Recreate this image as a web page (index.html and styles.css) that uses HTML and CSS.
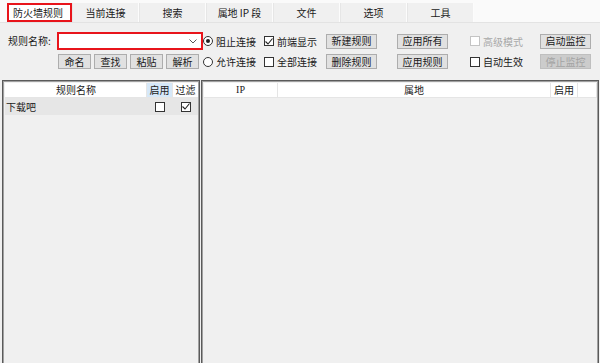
FILE: index.html
```html
<!DOCTYPE html>
<html lang="zh">
<head>
<meta charset="utf-8">
<link rel="stylesheet" href="styles.css">
</head>
<body>
<div class="app">
  <div class="tabs">
    <div class="tab active">防火墙规则</div>
    <div class="tab">当前连接</div>
    <div class="tab">搜索</div>
    <div class="tab">属地 IP 段</div>
    <div class="tab">文件</div>
    <div class="tab">选项</div>
    <div class="tab">工具</div>
  </div>
  <div class="controls">
    <div class="label">规则名称:</div>
    <div class="combo">
      <svg class="arrow" width="8" height="5" viewBox="0 0 8 5"><path d="M0.5 0.5 L4 4 L7.5 0.5" fill="none" stroke="#555" stroke-width="1"/></svg>
    </div>
    <div class="opt"><span class="radio on"></span>阻止连接</div>
    <div class="opt"><span class="check"><svg width="8" height="7" viewBox="0 0 8 7"><path d="M0.5 3.5 L3 6 L7.5 0.5" fill="none" stroke="#222" stroke-width="1.1"/></svg></span>前端显示</div>
    <div class="cell"><span class="btn">新建规则</span></div>
    <div class="cell"><span class="btn">应用所有</span></div>
    <div class="opt disabled"><span class="check"></span>高级模式</div>
    <div class="cell"><span class="btn">启动监控</span></div>

    <div></div>
    <div class="small-btns">
      <span class="btn sm">命名</span>
      <span class="btn sm">查找</span>
      <span class="btn sm">粘贴</span>
      <span class="btn sm">解析</span>
    </div>
    <div class="opt"><span class="radio"></span>允许连接</div>
    <div class="opt"><span class="check"></span>全部连接</div>
    <div class="cell"><span class="btn">删除规则</span></div>
    <div class="cell"><span class="btn">应用规则</span></div>
    <div class="opt"><span class="check"></span>自动生效</div>
    <div class="cell"><span class="btn off">停止监控</span></div>
  </div>
  <div class="panels">
    <div class="panel left">
      <div class="lrow head">
        <div class="c name center">规则名称</div>
        <div class="c en hl">启用</div>
        <div class="c flt">过滤</div>
      </div>
      <div class="lrow item">
        <div class="c name">下载吧</div>
        <div class="c en"><span class="check"></span></div>
        <div class="c flt"><span class="check"><svg width="8" height="7" viewBox="0 0 8 7"><path d="M0.5 3.5 L3 6 L7.5 0.5" fill="none" stroke="#222" stroke-width="1.1"/></svg></span></div>
      </div>
    </div>
    <div class="panel right">
      <div class="rrow head">
        <div class="c ip">IP</div>
        <div class="c loc">属地</div>
        <div class="c ren">启用</div>
        <div class="c rest"></div>
      </div>
    </div>
  </div>
</div>
</body>
</html>
```
FILE: styles.css
```css
* { box-sizing: border-box; }
html, body {
  margin: 0;
  padding: 0;
}
body {
  width: 600px;
  height: 363px;
  overflow: hidden;
  background: #f0f0f0;
  font-family: "Noto Sans CJK SC", "Liberation Sans", sans-serif;
  font-size: 10px;
  color: #1a1a1a;
}
.app {
  display: flex;
  flex-direction: column;
  height: 363px;
}
.tabs {
  flex: none;
  display: flex;
  padding: 3px 0 0 7px;
  background: #fafafa;
  height: 23px;
  border-bottom: 1px solid #e3e3e3;
}
.tab {
  width: 67px;
  height: 19px;
  display: flex;
  align-items: center;
  justify-content: center;
  background: #f0f0f0;
  border-right: 1px solid #fcfcfc;
  border-left: 1px solid #e6e6e6;
  line-height: 1;
}
.tab.active {
  width: 65px;
  background: #fff;
  border: 2px solid #e8141b;
  justify-content: flex-start;
  padding-left: 4px;
}
.controls {
  flex: none;
  display: grid;
  grid-template-columns: 49px 146px 61px 62px 71px 73px 70px 54px;
  grid-template-rows: 18px 15px;
  row-gap: 4px;
  padding: 9px 0 0 8px;
  height: 57px;
}
.label {
  display: flex;
  align-items: center;
  padding-bottom: 2px;
}
.combo {
  border: 2px solid #e8141b;
  background: #fff;
  width: 146px;
  height: 18px;
  display: flex;
  align-items: center;
  justify-content: flex-end;
  padding-right: 4px;
}
.opt {
  display: flex;
  align-items: center;
  gap: 3px;
  white-space: nowrap;
}
.opt.disabled { color: #a8a8a8; }
.radio {
  width: 10px;
  height: 10px;
  border: 1px solid #333;
  border-radius: 50%;
  background: #fff;
  display: inline-flex;
  align-items: center;
  justify-content: center;
}
.radio.on::after {
  content: "";
  width: 4px;
  height: 4px;
  border-radius: 50%;
  background: #222;
}
.check {
  width: 10px;
  height: 10px;
  border: 1px solid #333;
  background: #fff;
  display: inline-flex;
  align-items: center;
  justify-content: center;
  flex: none;
}
.disabled .check { border-color: #c4c4c4; }
.cell {
  display: flex;
  align-items: center;
}
.btn {
  display: inline-flex;
  align-items: center;
  justify-content: center;
  width: 51px;
  height: 15px;
  background: #e1e1e1;
  border: 1px solid #adadad;
  line-height: 1;
}
.btn.off {
  background: #cccccc;
  border-color: #bfbfbf;
  color: #a3a3a3;
}
.small-btns {
  display: flex;
  gap: 3px;
  padding-left: 1px;
}
.btn.sm { width: 33px; }
.panels {
  display: flex;
  gap: 1px;
  padding: 0 1px 0 2px;
  flex: 1;
  min-height: 0;
}
.panel {
  border: 1px solid #5a5a5a;
  border-bottom: none;
  box-shadow: inset 1px 1px 0 #a0a0a0, inset -1px 0 0 #a0a0a0;
  padding: 2px 1px 0 2px;
  height: 290px;
}
.panel.left { width: 198px; }
.panel.right { flex: 1; }
.lrow, .rrow {
  display: flex;
  height: 16px;
}
.lrow.head, .rrow.head {
  background: #fff;
  border-bottom: 1px solid #e5e5e5;
  height: 15px;
}
.lrow.item {
  background: #e6e6e6;
  height: 17px;
}
.c {
  display: flex;
  align-items: center;
  line-height: 1;
}
.lrow.head .c, .rrow.head .c {
  justify-content: center;
  border-right: 1px solid #e5e5e5;
}
.lrow .name { width: 142px; padding-left: 1px; }
.lrow .center { justify-content: center; }
.lrow .en { width: 26px; justify-content: center; }
.lrow .flt { width: 25px; justify-content: center; }
.lrow.head .flt { border-right: none; }
.hl { background: #d6e8f8; }
.rrow .ip { width: 74px; font-family: "Liberation Serif", serif; }
.rrow .loc { width: 273px; }
.rrow .ren { width: 27px; }
.rrow .rest { flex: 1; border-right: none; }
```
